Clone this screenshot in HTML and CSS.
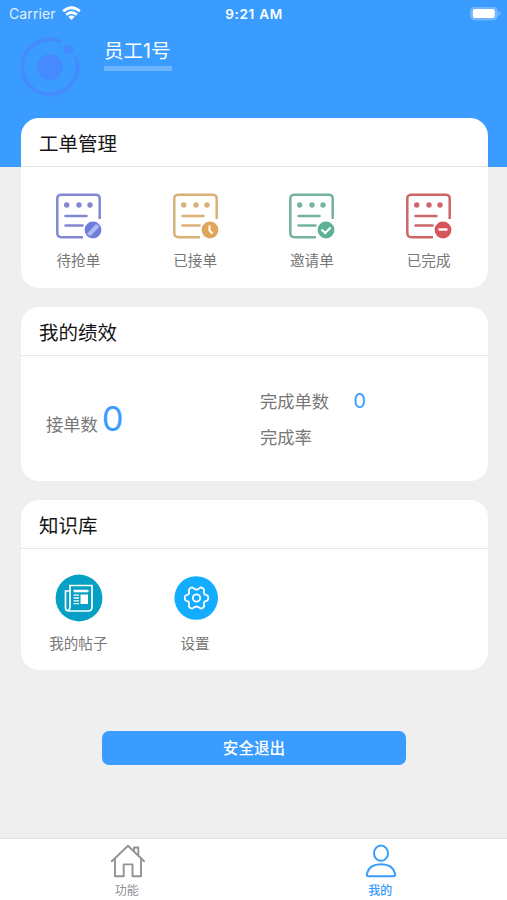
FILE: index.html
```html
<!DOCTYPE html>
<html lang="zh-CN">
<head>
<meta charset="utf-8">
<title>我的</title>
<link rel="stylesheet" href="styles.css">
</head>
<body>
<svg width="0" height="0" class="defs" aria-hidden="true">
  <symbol id="sheet" viewBox="0 0 48 48">
    <g fill="none" stroke="currentColor" stroke-width="2.5" stroke-linecap="round">
      <path d="M44.700 27V6.500Q44.700 2.800 40.500 2.800H6.500Q2.300 2.800 2.300 6.500V41Q2.300 45.200 6.500 45.200H28" stroke-linecap="butt"/>
      <path d="M10.500 24H31.500M10.500 33.500H27.500"/>
    </g>
    <g fill="currentColor"><circle cx="11.700" cy="13" r="2.700"/><circle cx="24" cy="13" r="2.700"/><circle cx="35" cy="13" r="2.700"/></g>
  </symbol>
</svg>
<div class="screen">
  <header class="top">
    <div class="status">
      <div class="carrier"><span>Carrier</span>
        <svg width="19" height="15" viewBox="0 0 19 15"><g fill="none" stroke="#fff" stroke-width="2.800"><path d="M1.200 5.200Q9.500-1.800 17.800 5.200"/><path d="M4.200 8.700Q9.500 4.200 14.800 8.700"/></g><path d="M6.300 10.800Q9.500 8.200 12.700 10.800L9.500 14Z" fill="#fff"/></svg>
      </div>
      <div class="time">9:21 AM</div>
      <svg class="battery" width="31" height="14" viewBox="0 0 31 14"><rect x=".7" y=".2" width="26.600" height="12.600" rx="4" fill="#6db6ff" stroke="#7cbcff"/><rect x="2.800" y="2" width="22" height="9" rx="2.200" fill="#fff"/><path d="M28.700 4Q32 6.500 28.700 9Z" fill="#83c0ff"/></svg>
    </div>
    <div class="profile">
      <svg width="60" height="60" viewBox="0 0 60 60"><circle cx="30" cy="30" r="13" fill="#458bff"/><path d="M41.500 4.900A27.500 27.500 0 1 0 55.200 19" fill="none" stroke="#458bff" stroke-width="3.600"/><circle cx="48.500" cy="12.800" r="4.800" fill="#458bff"/></svg>
      <div class="name">员工<span>1</span>号</div>
    </div>
  </header>
  <main>
    <section class="card orders">
      <h2>工单管理</h2>
      <div class="grid">
        <div class="item violet"><svg width="48" height="48" viewBox="0 0 48 48"><use href="#sheet"/><circle cx="38" cy="38" r="8.400" fill="#6f7ddd"/><path d="M32 42L41 32L44.500 34.500L35.500 44Z" fill="#afbcf5"/></svg><span>待抢单</span></div>
        <div class="item amber"><svg width="48" height="48" viewBox="0 0 48 48"><use href="#sheet"/><circle cx="38" cy="38" r="8.400" fill="#e0a75c"/><path d="M37.500 33.500V38.500L40.500 41.500" fill="none" stroke="#fff" stroke-width="2"/></svg><span>已接单</span></div>
        <div class="item green"><svg width="48" height="48" viewBox="0 0 48 48"><use href="#sheet"/><circle cx="38" cy="38" r="8.400" fill="#5db294"/><path d="M33.500 37.500L37.200 41L42.700 35.500" fill="none" stroke="#fff" stroke-width="2.200"/></svg><span>邀请单</span></div>
        <div class="item red"><svg width="48" height="48" viewBox="0 0 48 48"><use href="#sheet"/><circle cx="38" cy="38" r="8.400" fill="#d55558"/><path d="M33.500 37.500H42.500" stroke="#fff" stroke-width="2.400"/></svg><span>已完成</span></div>
      </div>
    </section>
    <section class="card stats">
      <h2>我的绩效</h2>
      <div class="figures">
        <div class="taken">接单数<b>0</b></div>
        <div class="done"><div>完成单数<b>0</b></div><div>完成率</div></div>
      </div>
    </section>
    <section class="card library">
      <h2>知识库</h2>
      <div class="grid">
        <div class="item"><svg width="48" height="48" viewBox="0 0 48 48"><circle cx="24" cy="24" r="23.400" fill="#069fc6"/><g fill="none" stroke="#fff" stroke-width="1.700"><path d="M15 33V11.500H37V33Q37 37 33 37H14Q10.500 37 10.500 33.500V17H14.500"/><path d="M15 32Q15 36.500 12.500 36.500"/><path d="M18.500 17H33.500" stroke-width="2.600"/><path d="M18.500 21.200H24M18.500 24H24M18.500 26.800H24M18.500 29.600H24" stroke-width="1.300"/></g><path d="M25.500 20.500H33V30H25.500Z" fill="#fff"/></svg><span>我的帖子</span></div>
        <div class="item"><svg width="48" height="48" viewBox="0 0 48 48"><circle cx="24.200" cy="24" r="21.800" fill="#13acff"/><g fill="none" stroke="#fff" stroke-width="1.800" stroke-linejoin="round"><circle cx="24.500" cy="24" r="3.700"/><path d="M19 13.800Q20.400 13 21.700 14.300Q24.500 16.800 27.300 14.300Q28.600 13 30 13.800L31.300 14.600Q32.600 15.600 32 17.300Q31.200 20.600 34.600 21.200Q36.200 21.500 36.200 23V25Q36.200 26.500 34.600 26.800Q31.200 27.400 32 30.700Q32.600 32.400 31.300 33.400L30 34.200Q28.600 35 27.300 33.700Q24.500 31.200 21.700 33.700Q20.400 35 19 34.200L17.700 33.400Q16.400 32.400 17 30.700Q17.800 27.400 14.400 26.800Q12.800 26.500 12.800 25V23Q12.800 21.500 14.400 21.200Q17.800 20.600 17 17.300Q16.400 15.600 17.700 14.600Z"/></g></svg><span>设置</span></div>
      </div>
    </section>
    <button class="logout">安全退出</button>
  </main>
  <nav class="tabs">
    <div class="tab"><svg width="36" height="34" viewBox="0 0 36 34"><g fill="none" stroke="currentColor" stroke-width="1.900" stroke-linejoin="round" stroke-linecap="round"><path d="M2.800 17.300L19 1.800L35 17.300"/><path d="M6 15V32.200H14.700V20.400H23.500V32.200H32V15"/><path d="M25 7V3.500H29.300V11"/></g></svg><span>功能</span></div>
    <div class="tab active"><svg width="36" height="34" viewBox="0 0 36 34"><g fill="none" stroke="currentColor" stroke-width="2"><ellipse cx="19" cy="9.200" rx="7" ry="7.600"/><path d="M6.500 32.200Q4.500 32.200 4.800 30Q7 20.300 19 20.300Q31 20.300 33.200 30Q33.500 32.200 31.500 32.200Z"/></g></svg><span>我的</span></div>
  </nav>
</div>
</body>
</html>
```

FILE: styles.css
```css
* { box-sizing: border-box; }

body {
  margin: 0;
  font-family: Inter, "Noto Sans CJK SC", sans-serif;
  color: #777;
}

svg { display: block; flex: none; }

.defs { position: absolute; }

.screen {
  height: 900px;
  display: flex;
  flex-direction: column;
  background: #efefef;
  overflow: hidden;
}

.top {
  height: 167px;
  flex: none;
  background: #399cfe;
  color: #fff;
}

.status {
  height: 27px;
  display: grid;
  grid-template-columns: 1fr auto 1fr;
  align-items: center;
  padding: 0 6px 0 9px;
}

.carrier {
  display: flex;
  align-items: center;
  gap: 6px;
  font-size: 14px;
  letter-spacing: 0.1px;
  color: #e4f2ff;
}

.time {
  margin-left: -2px;
  font-size: 13.5px;
  font-weight: 600;
  letter-spacing: 0.7px;
}

.battery { justify-self: end; }

.profile {
  display: flex;
  align-items: flex-start;
  padding: 10px 0 0 20px;
}

.name {
  margin-left: 24px;
  width: 68px;
  height: 34px;
  font-family: "Noto Sans CJK SC", sans-serif;
  font-size: 19.5px;
  line-height: 26px;
  white-space: nowrap;
  border-bottom: 5px solid #6bb5ff;
}

.name span { font-family: Inter, sans-serif; }

main {
  flex: 1;
  margin-top: -49px;
  padding: 0 19.5px 0 20.5px;
}

.card {
  background: #fff;
  border-radius: 18px;
  margin-bottom: 19px;
}

.orders { height: 170px; }
.stats { height: 174px; }
.library { height: 170px; }

h2 {
  margin: 0;
  height: 49px;
  padding-left: 18.5px;
  border-bottom: 1px solid #e7e7e7;
  font-size: 19.5px;
  line-height: 52px;
  font-weight: 400;
  color: #151515;
}

.grid {
  display: grid;
  grid-template-columns: repeat(4, 1fr);
  padding-top: 25px;
}

.item {
  display: flex;
  flex-direction: column;
  align-items: center;
}

.item span {
  margin: 11px 0 0 -1px;
  font-size: 14.6px;
  line-height: 22px;
  color: #777;
}

.orders .item span { margin-top: 10px; }

.violet { color: #8287cf; }
.amber { color: #dbb078; }
.green { color: #72b49d; }
.red { color: #cc6669; }

.figures {
  display: grid;
  grid-template-columns: 239.5px 1fr;
  font-size: 17.3px;
}

.figures b { font-weight: 400; color: #399cfe; }

.taken {
  padding: 38px 0 0 25.5px;
  line-height: 50px;
}

.taken b { margin-left: 4px; font-size: 34.5px; }

.done { padding-top: 27px; line-height: 36px; }

.done b { margin-left: 24px; font-size: 20px; }

.logout {
  display: block;
  width: 304px;
  height: 34px;
  margin: 61px auto 0 81.5px;
  border: 0;
  border-radius: 7px;
  background: #399cfe;
  color: #fff;
  font-family: inherit;
  font-size: 15.6px;
  font-weight: 500;
  line-height: 36px;
  padding: 0;
}

.tabs {
  flex: none;
  height: 62px;
  display: grid;
  grid-template-columns: 1fr 1fr;
  background: #fff;
  border-top: 1px solid #e2e2e2;
}

.tab {
  display: flex;
  flex-direction: column;
  align-items: center;
  padding-top: 5px;
  font-size: 12px;
  line-height: 18px;
  color: #929292;
}

.tab span { margin-top: 4px; }

.active { color: #399cfe; }
.active span { font-weight: 500; }
```
